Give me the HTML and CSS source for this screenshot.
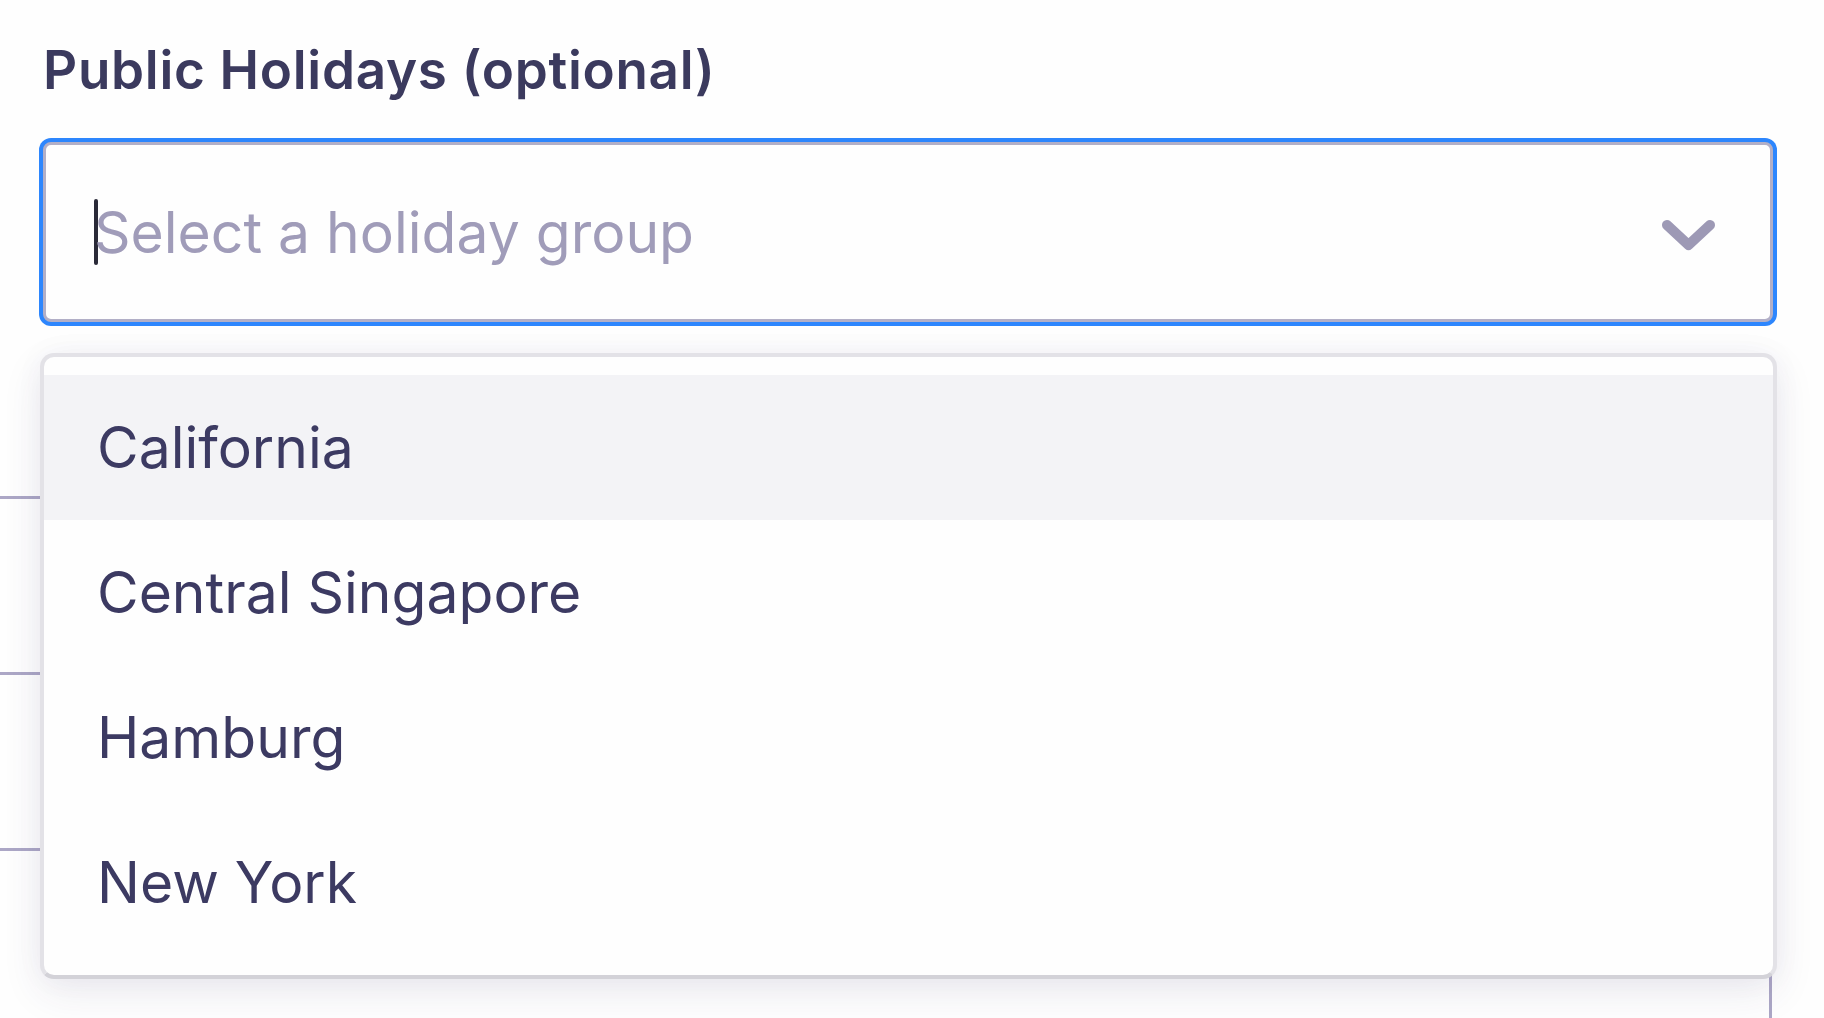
FILE: index.html
```html
<!DOCTYPE html>
<html lang="en">
<head>
<meta charset="utf-8">
<title>Public Holidays</title>
<link rel="stylesheet" href="styles.css">
</head>
<body>
<div class="backdrop" aria-hidden="true">
  <div class="bg-row"></div>
  <div class="bg-row"></div>
  <div class="bg-row bg-row-last"></div>
</div>
<main class="field">
  <label class="field-label" for="holiday">Public Holidays (optional)</label>
  <div class="select" id="holiday">
    <span class="caret"></span>
    <span class="placeholder">Select a holiday group</span>
    <svg class="chevron" width="56" height="34" viewBox="0 0 56 34" aria-hidden="true">
      <polyline points="6,7 27.5,27 49,7" fill="none" stroke="#9d99b5" stroke-width="10" stroke-linecap="round" stroke-linejoin="round"/>
    </svg>
  </div>
  <ul class="menu">
    <li class="menu-item is-active">California</li>
    <li class="menu-item">Central Singapore</li>
    <li class="menu-item">Hamburg</li>
    <li class="menu-item">New York</li>
  </ul>
</main>
</body>
</html>
```
FILE: styles.css
```css
html, body {
  margin: 0;
  padding: 0;
  background: #fefefe;
  height: 100%;
  overflow: hidden;
}
body {
  font-family: Inter, "Noto Sans", "Liberation Sans", sans-serif;
  color: #3c3a62;
  position: relative;
}
.backdrop {
  position: absolute;
  left: 0;
  top: 496px;
  width: 1772px;
  z-index: 0;
}
.bg-row {
  height: 173px;
  border-top: 3px solid #aca7c6;
}
.bg-row-last {
  height: 167px;
  border-right: 3px solid #aca7c6;
}
.field {
  position: relative;
  z-index: 1;
  padding-top: 44px;
}
.field-label {
  display: block;
  margin-left: 43px;
  font-size: 53px;
  line-height: 52px;
  font-weight: 600;
  color: #3b3a5e;
  letter-spacing: 0.7px;
}
.select {
  margin-top: 46px;
  margin-left: 43px;
  width: 1730px;
  height: 180px;
  box-sizing: border-box;
  border: 3px solid #b2afc7;
  border-radius: 8px;
  box-shadow: 0 0 0 4px #2d86fd;
  background: #fefefe;
  display: flex;
  align-items: center;
  padding-left: 48px;
  padding-right: 53px;
}
.caret {
  width: 4px;
  height: 66px;
  background: #2a2a38;
  border-radius: 2px;
  margin-right: -4px;
  flex: none;
}
.placeholder {
  font-size: 57px;
  line-height: 57px;
  color: #a09cb9;
  flex: 1;
}
.chevron {
  flex: none;
  margin-top: 6px;
}
.menu {
  list-style: none;
  margin: 31px 0 0 40px;
  padding: 18px 0 20px;
  width: 1737px;
  box-sizing: border-box;
  border: 4px solid #e3e2e7;
  border-bottom-color: #d3d2d8;
  border-radius: 14px;
  background: #fefefe;
  box-shadow: 0 14px 40px rgba(50, 40, 100, 0.09), 0 0 30px rgba(50, 40, 100, 0.04);
  overflow: hidden;
}
.menu-item {
  height: 145px;
  display: flex;
  align-items: center;
  padding-left: 53px;
  font-size: 57px;
  line-height: 58px;
  color: #3c3a62;
}
.menu-item.is-active {
  background: #f3f3f6;
}
```
